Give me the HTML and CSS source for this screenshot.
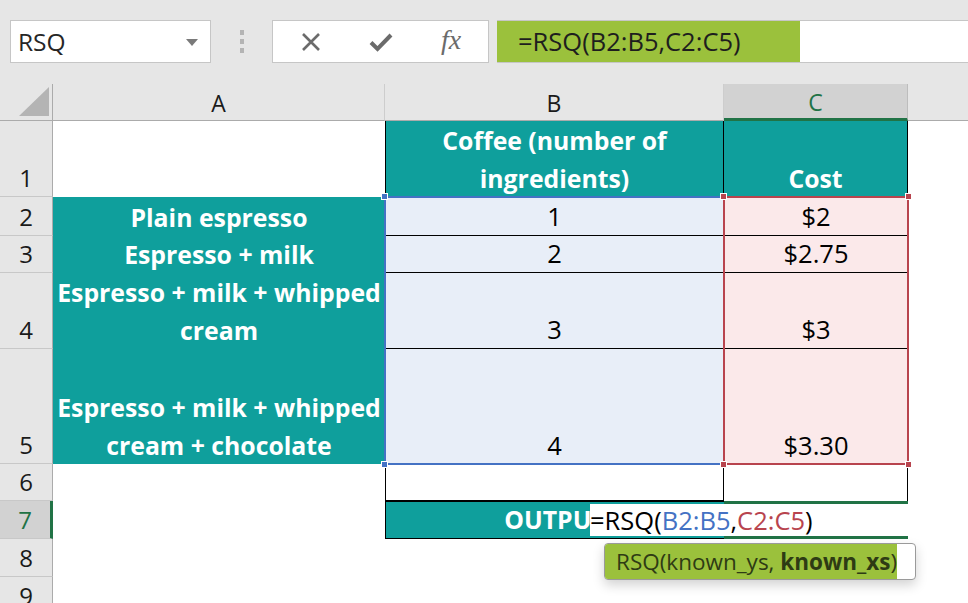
FILE: index.html
```html
<!DOCTYPE html>
<html lang="en">
<head>
  <meta charset="UTF-8" />
  <title>RSQ</title>
  <link rel="stylesheet" href="styles.css">
</head>
<body>
  <div class="app">
    <div class="toolbar">
      <div class="namebox">
        <span>RSQ</span>
        <span class="caret"></span>
      </div>
      <div class="grip"><i></i><i></i><i></i></div>
      <div class="fxbox">
        <div class="fxslot">
          <svg width="24" height="24" viewBox="0 0 24 24"><path d="M4 4 L20 20 M20 4 L4 20" stroke="#6b6b6b" stroke-width="2.6" fill="none"/></svg>
        </div>
        <div class="fxslot">
          <svg width="26" height="24" viewBox="0 0 26 24"><path d="M3 12.5 L9.5 19 L23 5" stroke="#6b6b6b" stroke-width="4" fill="none"/></svg>
        </div>
        <div class="fxslot"><span class="fx">fx</span></div>
      </div>
      <div class="formula">
        <span class="formula-sel">=RSQ(B2:B5,C2:C5)</span>
      </div>
    </div>

    <div class="sheet">
      <!-- cabeçalho de colunas -->
      <div class="corner"><span class="tri"></span></div>
      <div class="ch">A</div>
      <div class="ch">B</div>
      <div class="ch ch-active">C</div>
      <div class="ch ch-rest"></div>

      <div class="rh">1</div>
      <div class="cell"></div>
      <div class="cell teal b-left b-right">Coffee (number of<br>ingredients)</div>
      <div class="cell teal b-right">Cost</div>
      <div class="cell"></div>

      <div class="rh">2</div>
      <div class="cell teal">Plain espresso</div>
      <div class="cell blue b-bottom">1</div>
      <div class="cell pink b-bottom">$2</div>
      <div class="cell"></div>

      <div class="rh">3</div>
      <div class="cell teal">Espresso + milk</div>
      <div class="cell blue b-bottom">2</div>
      <div class="cell pink b-bottom">$2.75</div>
      <div class="cell"></div>

      <div class="rh">4</div>
      <div class="cell teal">Espresso + milk + whipped<br>cream</div>
      <div class="cell blue b-bottom">3</div>
      <div class="cell pink b-bottom">$3</div>
      <div class="cell"></div>

      <div class="rh">5</div>
      <div class="cell teal">Espresso + milk + whipped<br>cream + chocolate</div>
      <div class="cell blue">4</div>
      <div class="cell pink">$3.30</div>
      <div class="cell"></div>

      <div class="rh">6</div>
      <div class="cell"></div>
      <div class="cell b-left b-right b-bottom"></div>
      <div class="cell b-right"></div>
      <div class="cell"></div>

      <div class="rh rh-active">7</div>
      <div class="cell"></div>
      <div class="cell teal b-left b-top b-bottom">OUTPUT</div>
      <div class="cell active"></div>
      <div class="cell"></div>

      <div class="rh">8</div>
      <div class="cell"></div>
      <div class="cell"></div>
      <div class="cell"></div>
      <div class="cell"></div>

      <div class="rh">9</div>
      <div class="cell"></div>
      <div class="cell"></div>
      <div class="cell"></div>
      <div class="cell"></div>

      <!-- destaques das referências da fórmula -->
      <div class="range range-b">
        <i class="handle tl"></i><i class="handle bl"></i>
      </div>
      <div class="range range-c">
        <i class="handle tl"></i><i class="handle tr"></i>
        <i class="handle bl"></i><i class="handle br"></i>
      </div>

      <div class="editor">
        =RSQ(<span class="ref-b">B2:B5</span>,<span class="ref-c">C2:C5</span>)
        <div class="tip"><span class="tip-sel">RSQ(known_ys, <b>known_xs</b>)</span></div>
      </div>
    </div>
  </div>
</body>
</html>
```

FILE: styles.css
```css
body {
  margin: 0;
  font-family: "Open Sans", "Noto Sans", sans-serif;
  background-color: #fff;
  color: #000;
}

.app {
  width: 968px;
  height: 603px;
  overflow: hidden;
}

/* barra de fórmulas */
.toolbar {
  display: flex;
  align-items: flex-start;
  height: 84px;
  padding-top: 20px;
  box-sizing: border-box;
  background-color: #e6e6e6;
}

.namebox {
  margin-left: 10px;
  width: 201px;
  height: 43px;
  box-sizing: border-box;
  border: 1px solid #c6c6c6;
  background-color: #fff;
  display: flex;
  align-items: center;
  justify-content: space-between;
  padding: 0 12px 0 7px;
  font-size: 24.5px;
  color: #262626;
}

.caret {
  width: 0;
  height: 0;
  border-left: 6px solid transparent;
  border-right: 6px solid transparent;
  border-top: 7px solid #7a7a7a;
  margin-top: 2px;
}

.grip {
  width: 61px;
  height: 43px;
  display: flex;
  flex-direction: column;
  align-items: center;
  justify-content: center;
  gap: 4px;
}

.grip i {
  width: 4px;
  height: 5px;
  background-color: #b4b4b4;
}

.fxbox {
  width: 217px;
  height: 43px;
  box-sizing: border-box;
  border: 1px solid #c6c6c6;
  background-color: #fff;
  display: flex;
  padding-left: 3px;
}

.fxslot {
  width: 70px;
  display: flex;
  align-items: center;
  justify-content: center;
}

.fx {
  font-family: "Liberation Serif", serif;
  font-style: italic;
  font-size: 28px;
  color: #6b6b6b;
  margin-top: -3px;
}

.formula {
  flex: 1;
  height: 43px;
  margin-left: 8px;
  box-sizing: border-box;
  border-top: 1px solid #c6c6c6;
  border-bottom: 1px solid #c6c6c6;
  background-color: #fff;
  display: flex;
}

.formula-sel {
  width: 303px;
  box-sizing: border-box;
  padding-left: 21px;
  background-color: #9bc13c;
  font-size: 25.5px;
  line-height: 41px;
  color: #1e1e1e;
}

/* planilha */
.sheet {
  position: relative;
  display: grid;
  grid-template-columns: 53px 332px 339px 184px 1fr;
  grid-template-rows: 37px 76px 39px 37px 76px 115px 37px 38px 38px 1fr;
  height: 519px;
  font-size: 25.5px;
}

.corner {
  background-color: #e6e6e6;
  border-right: 1px solid #ababab;
  border-bottom: 1px solid #ababab;
  position: relative;
}

.tri {
  position: absolute;
  right: 3px;
  bottom: 4px;
  width: 30px;
  height: 29px;
  background-color: #b4b4b4;
  clip-path: polygon(100% 0, 100% 100%, 0 100%);
}

.ch {
  background-color: #e6e6e6;
  border-right: 1px solid #cdcdcd;
  border-bottom: 1px solid #ababab;
  display: flex;
  align-items: center;
  justify-content: center;
  font-size: 23px;
  color: #1a1a1a;
  padding-top: 2px;
}

.ch-active {
  background-color: #d2d2d2;
  color: #217346;
  border-bottom: 3px solid #217346;
  border-right-color: #bdbdbd;
}

.ch-rest {
  border-right: none;
}

.rh {
  background-color: #e6e6e6;
  border-right: 1px solid #ababab;
  border-bottom: 1px solid #c8c8c8;
  display: flex;
  align-items: flex-end;
  justify-content: center;
  font-size: 24px;
  line-height: 37px;
  color: #1a1a1a;
}

.rh-active {
  background-color: #d2d2d2;
  color: #217346;
  border-right: 3px solid #217346;
}

.cell {
  display: flex;
  flex-direction: column;
  justify-content: flex-end;
  align-items: center;
  text-align: center;
  line-height: 38px;
  white-space: nowrap;
  overflow: hidden;
}

.teal {
  background-color: #0f9f9c;
  color: #fff;
  font-weight: 700;
  font-size: 24.8px;
}

.blue {
  background-color: #e8eef8;
}

.pink {
  background-color: #fbe9ea;
}

.b-left { border-left: 1px solid #000; }
.b-right { border-right: 1px solid #000; }
.b-top { border-top: 1px solid #000; }
.b-bottom { border-bottom: 1px solid #000; }

.active {
  border-top: 3px solid #217346;
  border-bottom: 3px solid #217346;
}

/* contornos das referências */
.range {
  position: absolute;
  inset: -1px;
  border: 2px solid;
  pointer-events: none;
}

.range-b {
  grid-row: 3 / 7;
  grid-column: 3 / 4;
  border-color: #4472c4;
}

.range-c {
  grid-row: 3 / 7;
  grid-column: 4 / 5;
  border-color: #b8444e;
}

.handle {
  position: absolute;
  width: 7px;
  height: 7px;
  box-sizing: border-box;
  border: 1px solid #fff;
}

.range-b .handle { background-color: #4472c4; }
.range-c .handle { background-color: #b8444e; }

.handle.tl { left: -5px; top: -5px; }
.handle.tr { right: -5px; top: -5px; }
.handle.bl { left: -5px; bottom: -5px; }
.handle.br { right: -5px; bottom: -5px; }

/* edição da célula C7 */
.editor {
  position: absolute;
  grid-row: 8 / 9;
  grid-column: 3 / 6;
  top: 3px;
  bottom: 3px;
  left: 205px;
  width: 322px;
  background-color: #fff;
  line-height: 32px;
  white-space: nowrap;
}

.ref-b { color: #4472c4; }
.ref-c { color: #b8444e; }

.tip {
  position: absolute;
  left: 14px;
  top: 39px;
  width: 312px;
  height: 37px;
  box-sizing: border-box;
  border: 1px solid #9a9a9a;
  border-radius: 4px;
  background-color: #fff;
  box-shadow: 0 5px 12px rgba(0, 0, 0, 0.18);
  overflow: hidden;
  display: flex;
}

.tip-sel {
  background-color: #9bc13c;
  padding-left: 11px;
  font-size: 22.5px;
  line-height: 35px;
  color: #2e3b14;
}

.tip-sel b {
  font-weight: 700;
}
```
